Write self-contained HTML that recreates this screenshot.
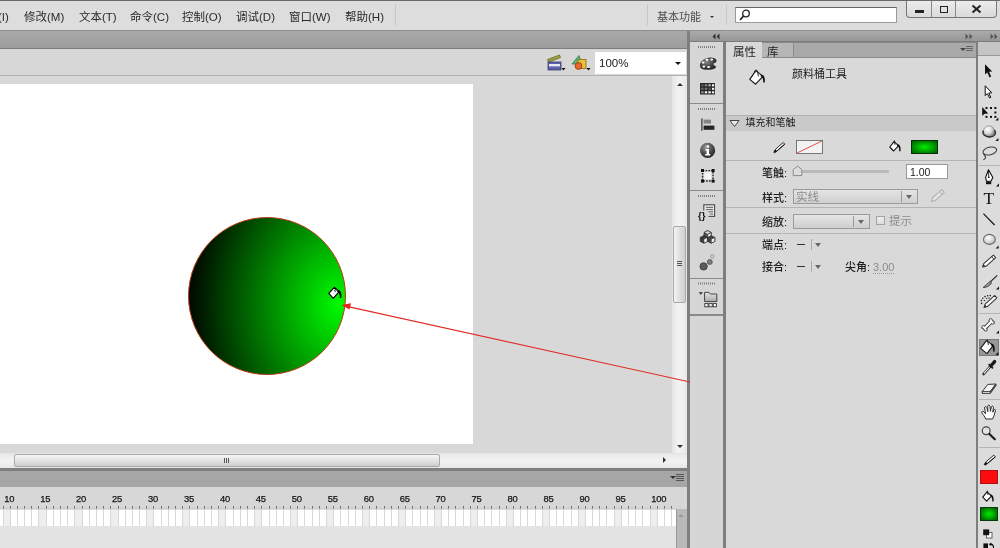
<!DOCTYPE html>
<html lang="zh-CN">
<head>
<meta charset="utf-8">
<title>Flash</title>
<style>
html,body{margin:0;padding:0;}
body{width:1000px;height:548px;overflow:hidden;position:relative;background:#d6d6d6;font-family:"Liberation Sans","Noto Sans CJK SC",sans-serif;font-size:12px;color:#222;}
.a{position:absolute;}
.t{position:absolute;white-space:nowrap;line-height:14px;}
#menubar{left:0;top:0;width:1000px;height:30px;background:#dddddd;border-top:1px solid #6a6a6a;box-sizing:border-box;}
.mi{top:9.5px;font-size:11.5px;color:#2a2a2a;}
.band{background:linear-gradient(#a9a9a9,#9d9d9d);}
.vsep{background:#7e7e7e;}
.hl{height:1px;background:#b4b4b4;}
.lab{font-size:11px;color:#1e1e1e;font-weight:500;}
</style>
</head>
<body>
<div id="wrap" style="position:absolute;left:0;top:0;width:1000px;height:548px;will-change:transform;">
<!-- ===== menu bar ===== -->
<div class="a" id="menubar"></div>
<div class="t mi" style="left:-25px;">插入(I)</div>
<div class="t mi" style="left:24px;">修改(M)</div>
<div class="t mi" style="left:79px;">文本(T)</div>
<div class="t mi" style="left:130px;">命令(C)</div>
<div class="t mi" style="left:182px;">控制(O)</div>
<div class="t mi" style="left:236px;">调试(D)</div>
<div class="t mi" style="left:289px;">窗口(W)</div>
<div class="t mi" style="left:345px;">帮助(H)</div>
<div class="a" style="left:395px;top:5px;width:1px;height:20px;background:#c6c6c6;"></div>
<div class="a" style="left:647px;top:5px;width:1px;height:20px;background:#c6c6c6;"></div>
<div class="t mi" style="left:657px;color:#4c4c4c;font-size:11px;">基本功能</div>
<div class="a" style="left:709.5px;top:15.5px;width:0;height:0;border-left:2.5px solid transparent;border-right:2.5px solid transparent;border-top:2.5px solid #333;"></div>
<div class="a" style="left:726px;top:5px;width:1px;height:20px;background:#c6c6c6;"></div>
<!-- search -->
<div class="a" style="left:735px;top:7px;width:162px;height:16px;background:#fff;border:1px solid #9a9a9a;border-top-color:#666;box-sizing:border-box;"></div>
<svg class="a" style="left:738px;top:8px;" width="14" height="14" viewBox="0 0 14 14"><circle cx="8" cy="5.5" r="3.3" fill="none" stroke="#222" stroke-width="1.3"/><path d="M5.6 8 L2 12" stroke="#222" stroke-width="1.8"/></svg>
<!-- window buttons -->
<div class="a" style="left:906px;top:1px;width:91px;height:16.5px;border:1px solid #777;border-top:none;border-radius:0 0 4px 4px;background:linear-gradient(#ececec,#dadada);box-sizing:border-box;"></div>
<div class="a" style="left:931px;top:1px;width:1px;height:16px;background:#888;"></div>
<div class="a" style="left:955px;top:1px;width:1px;height:16px;background:#888;"></div>
<div class="a" style="left:914.5px;top:10px;width:9.5px;height:2.5px;background:#222;"></div>
<div class="a" style="left:939.5px;top:5.5px;width:8.5px;height:7px;border:1.8px solid #222;box-sizing:border-box;"></div>
<svg class="a" style="left:971px;top:4px;" width="11" height="10" viewBox="0 0 11 10"><path d="M1.5 1.5 L9.5 8.5 M9.5 1.5 L1.5 8.5" stroke="#222" stroke-width="2"/></svg>

<!-- ===== dark band under menu ===== -->
<div class="a band" style="left:0;top:30px;width:1000px;height:19px;border-top:1px solid #8e8e8e;border-bottom:1px solid #7c7c7c;box-sizing:border-box;"></div>

<!-- ===== document toolbar / stage ===== -->
<div class="a" style="left:0;top:49px;width:687px;height:26px;background:#d7d7d7;"></div>
<div class="a" style="left:0;top:75px;width:687px;height:1px;background:#b2b2b2;"></div>
<div class="a" style="left:0;top:76px;width:672px;height:377px;background:#d8d8d8;"></div>
<div class="a" id="stage" style="left:0;top:84px;width:473px;height:360px;background:#fff;"></div>

<!-- vertical scrollbar of stage -->
<div class="a" style="left:672px;top:76px;width:15px;height:377px;background:linear-gradient(90deg,#e4e4e4,#f2f2f2 40%,#f0f0f0 70%,#e6e6e6);"></div>
<div class="a" style="left:677px;top:83px;width:0;height:0;border-left:3px solid transparent;border-right:3px solid transparent;border-bottom:3.5px solid #333;"></div>
<div class="a" style="left:677px;top:444.5px;width:0;height:0;border-left:3px solid transparent;border-right:3px solid transparent;border-top:3.5px solid #333;"></div>
<div class="a" style="left:673px;top:226px;width:13px;height:77px;box-sizing:border-box;border:1px solid #a9a9a9;border-radius:2px;background:linear-gradient(90deg,#f4f4f4,#dcdcdc 60%,#cfcfcf);"></div>
<div class="a" style="left:677px;top:261px;width:5px;height:1px;background:#555;box-shadow:0 2px 0 #555,0 4px 0 #555;"></div>
<!-- horizontal scrollbar -->
<div class="a" style="left:0;top:453px;width:687px;height:15px;background:linear-gradient(#e6e6e6,#f1f1f1 40%,#efefef 70%,#e6e6e6);"></div>
<div class="a" style="left:14px;top:454px;width:426px;height:13px;box-sizing:border-box;border:1px solid #a9a9a9;border-radius:2px;background:linear-gradient(#f6f6f6,#e2e2e2 55%,#cdcdcd);"></div>
<div class="a" style="left:224px;top:458px;width:1px;height:5px;background:#555;box-shadow:2px 0 0 #555,4px 0 0 #555;"></div>
<div class="a" style="left:663px;top:457px;width:0;height:0;border-top:3px solid transparent;border-bottom:3px solid transparent;border-left:3.5px solid #333;"></div>

<!-- circle + arrow -->
<svg class="a" style="left:0;top:76px;z-index:5;" width="700" height="376" viewBox="0 76 700 376">
<defs>
<radialGradient id="g1" gradientUnits="userSpaceOnUse" cx="339" cy="304" r="156" gradientTransform="translate(339 304) scale(1 1.25) translate(-339 -304)">
<stop offset="0" stop-color="#00fb00"/>
<stop offset="0.9" stop-color="#001600"/>
<stop offset="1" stop-color="#000000"/>
</radialGradient>
</defs>
<circle cx="267" cy="296" r="78.5" fill="url(#g1)" stroke="#b83a12" stroke-width="1"/>
<line x1="348" y1="306.6" x2="690" y2="382" stroke="#e02a22" stroke-width="1.1"/>
<polygon points="341.5,305 351,303.2 349.5,309.6" fill="#e8201c"/>
<!-- bucket cursor -->
<g>
<path d="M328.8 293.4 L334.4 287.4 L339.4 291.4 L333.2 298.4 Z" fill="#fff" stroke="#000" stroke-width="1.2" stroke-linejoin="round"/>
<path d="M338 289.8 C341 290.6 341.8 293.6 341.4 298 L339.8 298 C340 295 339.6 293.2 337 291.6 Z" fill="#000"/>
<circle cx="335.4" cy="290.6" r="0.9" fill="none" stroke="#000" stroke-width="0.7"/>
<path d="M335.2 287.6 L335.4 289.8" stroke="#000" stroke-width="0.8"/>
</g>
</svg>

<!-- zoom toolbar -->
<div class="a" style="left:595px;top:52px;width:91px;height:22px;background:#fff;"></div>
<div class="t" style="left:599px;top:55.5px;font-size:11.5px;color:#222;">100%</div>
<div class="a" style="left:675px;top:62px;width:0;height:0;border-left:3.5px solid transparent;border-right:3.5px solid transparent;border-top:3.5px solid #111;"></div>
<!-- edit scene icon -->
<svg class="a" style="left:545px;top:52px;" width="22" height="22" viewBox="0 0 22 22">
<path d="M2.5 7.5 L14.5 3 L15.5 5.6 L3.5 10.2 Z" fill="#9aa23a" stroke="#5a6020" stroke-width="0.7"/>
<rect x="3" y="10" width="13" height="8" fill="#5d62a8" stroke="#3a3d70" stroke-width="0.8"/>
<rect x="4" y="12" width="11" height="2.4" fill="#e8e8f4"/>
<path d="M16.5 16 l4 0 l-2 2.6 z" fill="#111"/>
</svg>
<!-- edit symbols icon -->
<svg class="a" style="left:569px;top:52px;" width="24" height="22" viewBox="0 0 24 22">
<path d="M3 12 L10 3.5 L13 12 Z" fill="#58b878" stroke="#2f7a4a" stroke-width="0.8"/>
<rect x="9" y="7.5" width="8" height="9" fill="#e8c040" stroke="#8a6a10" stroke-width="0.8"/>
<circle cx="9.5" cy="14" r="3.4" fill="#e86a28" stroke="#8a3a10" stroke-width="0.8"/>
<path d="M17.5 16 l4 0 l-2 2.6 z" fill="#111"/>
</svg>

<!-- ===== timeline ===== -->
<div class="a" style="left:0;top:468px;width:687px;height:3px;background:#7f7f7f;"></div>
<div class="a band" style="left:0;top:471px;width:687px;height:16px;background:#a6a6a6;"></div>
<div class="a" style="left:670px;top:476px;width:0;height:0;border-left:3px solid transparent;border-right:3px solid transparent;border-top:3px solid #333;"></div>
<div class="a" style="left:676px;top:474px;width:8px;height:1px;background:#555;box-shadow:0 2px 0 #555,0 4px 0 #555,0 6px 0 #555;"></div>
<div class="a" style="left:0;top:487px;width:687px;height:22px;background:#d7d7d7;"></div>
<div class="a" style="left:0;top:509px;width:676px;height:17px;background:#fff;" id="frames"></div>
<svg class="a" style="left:0;top:487px;" width="676" height="39" viewBox="0 0 676 39"><rect x="3.5" y="22" width="7.0" height="17" fill="#eeeeee"/><rect x="38.5" y="22" width="8.0" height="17" fill="#eeeeee"/><rect x="74.5" y="22" width="8.0" height="17" fill="#eeeeee"/><rect x="110.5" y="22" width="8.0" height="17" fill="#eeeeee"/><rect x="146.5" y="22" width="7.0" height="17" fill="#eeeeee"/><rect x="182.5" y="22" width="7.0" height="17" fill="#eeeeee"/><rect x="218.5" y="22" width="7.0" height="17" fill="#eeeeee"/><rect x="254.5" y="22" width="7.0" height="17" fill="#eeeeee"/><rect x="290.5" y="22" width="7.0" height="17" fill="#eeeeee"/><rect x="326.5" y="22" width="7.0" height="17" fill="#eeeeee"/><rect x="362.5" y="22" width="7.0" height="17" fill="#eeeeee"/><rect x="398.5" y="22" width="7.0" height="17" fill="#eeeeee"/><rect x="434.5" y="22" width="7.0" height="17" fill="#eeeeee"/><rect x="470.5" y="22" width="7.0" height="17" fill="#eeeeee"/><rect x="506.5" y="22" width="7.0" height="17" fill="#eeeeee"/><rect x="542.5" y="22" width="7.0" height="17" fill="#eeeeee"/><rect x="578.5" y="22" width="7.0" height="17" fill="#eeeeee"/><rect x="614.5" y="22" width="7.0" height="17" fill="#eeeeee"/><rect x="650.5" y="22" width="7.0" height="17" fill="#eeeeee"/><path d="M-4.5 22V39M3.5 22V39M10.5 22V39M17.5 22V39M24.5 22V39M31.5 22V39M38.5 22V39M46.5 22V39M53.5 22V39M60.5 22V39M67.5 22V39M74.5 22V39M82.5 22V39M89.5 22V39M96.5 22V39M103.5 22V39M110.5 22V39M118.5 22V39M125.5 22V39M132.5 22V39M139.5 22V39M146.5 22V39M153.5 22V39M161.5 22V39M168.5 22V39M175.5 22V39M182.5 22V39M189.5 22V39M197.5 22V39M204.5 22V39M211.5 22V39M218.5 22V39M225.5 22V39M233.5 22V39M240.5 22V39M247.5 22V39M254.5 22V39M261.5 22V39M269.5 22V39M276.5 22V39M283.5 22V39M290.5 22V39M297.5 22V39M304.5 22V39M312.5 22V39M319.5 22V39M326.5 22V39M333.5 22V39M340.5 22V39M348.5 22V39M355.5 22V39M362.5 22V39M369.5 22V39M376.5 22V39M384.5 22V39M391.5 22V39M398.5 22V39M405.5 22V39M412.5 22V39M420.5 22V39M427.5 22V39M434.5 22V39M441.5 22V39M448.5 22V39M455.5 22V39M463.5 22V39M470.5 22V39M477.5 22V39M484.5 22V39M491.5 22V39M499.5 22V39M506.5 22V39M513.5 22V39M520.5 22V39M527.5 22V39M535.5 22V39M542.5 22V39M549.5 22V39M556.5 22V39M563.5 22V39M571.5 22V39M578.5 22V39M585.5 22V39M592.5 22V39M599.5 22V39M606.5 22V39M614.5 22V39M621.5 22V39M628.5 22V39M635.5 22V39M642.5 22V39M650.5 22V39M657.5 22V39M664.5 22V39M671.5 22V39" stroke="#d8d8d8" stroke-width="1" fill="none"/><path d="M-4.5 19V22M3.5 19V22M10.5 19V22M17.5 19V22M24.5 19V22M31.5 19V22M38.5 19V22M46.5 19V22M53.5 19V22M60.5 19V22M67.5 19V22M74.5 19V22M82.5 19V22M89.5 19V22M96.5 19V22M103.5 19V22M110.5 19V22M118.5 19V22M125.5 19V22M132.5 19V22M139.5 19V22M146.5 19V22M153.5 19V22M161.5 19V22M168.5 19V22M175.5 19V22M182.5 19V22M189.5 19V22M197.5 19V22M204.5 19V22M211.5 19V22M218.5 19V22M225.5 19V22M233.5 19V22M240.5 19V22M247.5 19V22M254.5 19V22M261.5 19V22M269.5 19V22M276.5 19V22M283.5 19V22M290.5 19V22M297.5 19V22M304.5 19V22M312.5 19V22M319.5 19V22M326.5 19V22M333.5 19V22M340.5 19V22M348.5 19V22M355.5 19V22M362.5 19V22M369.5 19V22M376.5 19V22M384.5 19V22M391.5 19V22M398.5 19V22M405.5 19V22M412.5 19V22M420.5 19V22M427.5 19V22M434.5 19V22M441.5 19V22M448.5 19V22M455.5 19V22M463.5 19V22M470.5 19V22M477.5 19V22M484.5 19V22M491.5 19V22M499.5 19V22M506.5 19V22M513.5 19V22M520.5 19V22M527.5 19V22M535.5 19V22M542.5 19V22M549.5 19V22M556.5 19V22M563.5 19V22M571.5 19V22M578.5 19V22M585.5 19V22M592.5 19V22M599.5 19V22M606.5 19V22M614.5 19V22M621.5 19V22M628.5 19V22M635.5 19V22M642.5 19V22M650.5 19V22M657.5 19V22M664.5 19V22M671.5 19V22" stroke="#707070" stroke-width="1" fill="none"/><g font-family="Liberation Sans, sans-serif" font-size="9.4" letter-spacing="-0.2" fill="#151515" stroke="#151515" stroke-width="0.25"><text y="14.8" x="4.2">10</text><text y="14.8" x="40.2">15</text><text y="14.8" x="76.1">20</text><text y="14.8" x="112.1">25</text><text y="14.8" x="148.0">30</text><text y="14.8" x="183.9">35</text><text y="14.8" x="219.9">40</text><text y="14.8" x="255.8">45</text><text y="14.8" x="291.8">50</text><text y="14.8" x="327.8">55</text><text y="14.8" x="363.7">60</text><text y="14.8" x="399.7">65</text><text y="14.8" x="435.6">70</text><text y="14.8" x="471.6">75</text><text y="14.8" x="507.5">80</text><text y="14.8" x="543.5">85</text><text y="14.8" x="579.4">90</text><text y="14.8" x="615.4">95</text><text y="14.8" x="651.3">100</text></g><rect x="0" y="21.5" width="676" height="1" fill="#c4c4c4"/></svg>
<div class="a" style="left:0;top:526px;width:676px;height:22px;background:#e3e3e3;"></div>
<div class="a" style="left:676px;top:509px;width:11px;height:39px;background:#b9b9b9;border-left:1px solid #999;box-sizing:border-box;"></div>
<div class="a" style="left:678px;top:514px;width:0;height:0;border-left:3px solid transparent;border-right:3px solid transparent;border-bottom:3px solid #999;"></div>

<!-- ===== right side ===== -->
<div class="a vsep" style="left:687px;top:31px;width:3px;height:517px;"></div>
<!-- dock column -->
<div class="a" style="left:690px;top:31px;width:310px;height:11px;background:linear-gradient(#ababab,#979797);border-bottom:1px solid #7c7c7c;box-sizing:border-box;"></div>
<div class="a" style="left:690px;top:42px;width:33px;height:506px;background:#d6d6d6;"></div>
<svg class="a" style="left:712px;top:33px;" width="8" height="7" viewBox="0 0 8 7"><path d="M3.5 0.5 L0.5 3.5 L3.5 6.5 Z M7.5 0.5 L4.5 3.5 L7.5 6.5 Z" fill="#333"/></svg>
<div class="a vsep" style="left:723px;top:42px;width:3px;height:506px;"></div>
<div class="a" style="left:690px;top:103px;width:33px;height:1px;background:#8a8a8a;"></div>
<div class="a" style="left:690px;top:190px;width:33px;height:1px;background:#8a8a8a;"></div>
<div class="a" style="left:690px;top:278px;width:33px;height:1px;background:#8a8a8a;"></div>
<div class="a" style="left:690px;top:314px;width:33px;height:1.5px;background:#8a8a8a;"></div>

<!-- panel header -->

<svg class="a" style="left:965px;top:33px;" width="8" height="7" viewBox="0 0 8 7"><path d="M0.5 0.5 L3.5 3.5 L0.5 6.5 Z M4.5 0.5 L7.5 3.5 L4.5 6.5 Z" fill="#555"/></svg>
<svg class="a" style="left:990px;top:33px;" width="8" height="7" viewBox="0 0 8 7"><path d="M0.5 0.5 L3.5 3.5 L0.5 6.5 Z M4.5 0.5 L7.5 3.5 L4.5 6.5 Z" fill="#555"/></svg>
<!-- tab bar -->
<div class="a" style="left:726px;top:42px;width:250px;height:16px;background:#a9a9a9;border-top:1px solid #888;border-bottom:1px solid #8a8a8a;box-sizing:border-box;"></div>
<div class="a" style="left:726px;top:42px;width:36px;height:16px;background:#d9d9d9;"></div>
<div class="a" style="left:762px;top:43px;width:31px;height:14px;background:#b6b6b6;border-right:1px solid #8a8a8a;"></div>
<div class="t" style="left:733px;top:44.5px;font-size:11.5px;color:#222;">属性</div>
<div class="t" style="left:767px;top:44.5px;font-size:11.5px;color:#222;">库</div>
<div class="a" style="left:960px;top:48px;width:0;height:0;border-left:3px solid transparent;border-right:3px solid transparent;border-top:3px solid #444;"></div>
<div class="a" style="left:966px;top:46px;width:7px;height:1px;background:#666;box-shadow:0 2px 0 #666,0 4px 0 #666;"></div>
<!-- panel body -->
<div class="a" style="left:726px;top:58px;width:250px;height:490px;background:#d9d9d9;"></div>
<div class="t" style="left:792px;top:67px;font-size:11px;color:#1a1a1a;">颜料桶工具</div>
<!-- section header -->
<div class="a" style="left:726px;top:115px;width:250px;height:16px;background:#c9c9c9;border-top:1px solid #b0b0b0;box-sizing:border-box;"></div>
<svg class="a" style="left:729px;top:119px;" width="12" height="10" viewBox="0 0 12 10"><path d="M1 1.5 L10 1.5 L5.5 7.5 Z" fill="#e8e8e8" stroke="#444" stroke-width="1"/></svg>
<div class="t" style="left:745.5px;top:116px;font-size:10px;color:#222;">填充和笔触</div>
<!-- separators -->
<div class="a hl" style="left:726px;top:160px;width:250px;"></div>
<div class="a hl" style="left:726px;top:207px;width:250px;"></div>
<div class="a hl" style="left:726px;top:233px;width:250px;"></div>
<!-- stroke swatch -->
<div class="a" style="left:796px;top:140px;width:27px;height:14px;background:#f2f2f2;border:1px solid #777;box-sizing:border-box;"></div>
<svg class="a" style="left:797px;top:141px;" width="25" height="12" viewBox="0 0 25 12"><line x1="0" y1="12" x2="25" y2="0" stroke="#e05050" stroke-width="1"/></svg>
<!-- fill swatch -->
<div class="a" style="left:911px;top:140px;width:27px;height:14px;border:1px solid #083008;box-sizing:border-box;background:radial-gradient(ellipse at center,#00f000 0%,#00b000 40%,#005800 100%);"></div>
<!-- rows -->
<div class="t lab" style="left:762px;top:166px;">笔触:</div>
<div class="a" style="left:797px;top:170px;width:92px;height:3px;background:#b9b9b9;border-radius:1px;"></div>
<svg class="a" style="left:792px;top:165px;" width="11" height="12" viewBox="0 0 11 12"><path d="M5.5 1 L9.8 4.6 L9.8 10.6 L1.2 10.6 L1.2 4.6 Z" fill="#dcdcdc" stroke="#8a8a8a" stroke-width="1"/></svg>
<div class="a" style="left:906px;top:164px;width:42px;height:15px;background:#fff;border:1px solid #999;box-sizing:border-box;"></div>
<div class="t" style="left:910px;top:165px;font-size:10.5px;color:#222;">1.00</div>
<div class="t lab" style="left:762px;top:191px;">样式:</div>
<div class="a" style="left:793px;top:189px;width:125px;height:15px;background:linear-gradient(#e4e4e4,#cfcfcf);border:1px solid #9a9a9a;box-sizing:border-box;"></div>
<div class="a" style="left:901px;top:191px;width:1px;height:11px;background:#9a9a9a;"></div>
<div class="a" style="left:906px;top:195px;width:0;height:0;border-left:3.5px solid transparent;border-right:3.5px solid transparent;border-top:4px solid #666;"></div>
<div class="t" style="left:796px;top:190px;font-size:11.5px;color:#8c8c8c;">实线</div>
<div class="t lab" style="left:762px;top:215px;">缩放:</div>
<div class="a" style="left:793px;top:214px;width:77px;height:15px;background:linear-gradient(#e4e4e4,#cfcfcf);border:1px solid #9a9a9a;box-sizing:border-box;"></div>
<div class="a" style="left:853px;top:216px;width:1px;height:11px;background:#9a9a9a;"></div>
<div class="a" style="left:858px;top:220px;width:0;height:0;border-left:3.5px solid transparent;border-right:3.5px solid transparent;border-top:4px solid #666;"></div>
<div class="a" style="left:875.5px;top:216px;width:9px;height:9px;background:linear-gradient(#f0f0f0,#dcdcdc);border:1px solid #a2a2a2;box-sizing:border-box;"></div>
<div class="t" style="left:889px;top:214px;font-size:11.5px;color:#8c8c8c;">提示</div>
<div class="t lab" style="left:762px;top:238px;">端点:</div>
<div class="a" style="left:797px;top:244px;width:8px;height:1px;background:#333;"></div>
<div class="a" style="left:811px;top:239px;width:1px;height:11px;background:#aaa;"></div>
<div class="a" style="left:815px;top:243px;width:0;height:0;border-left:3.5px solid transparent;border-right:3.5px solid transparent;border-top:4px solid #666;"></div>
<div class="t lab" style="left:762px;top:260px;">接合:</div>
<div class="a" style="left:797px;top:266px;width:8px;height:1px;background:#333;"></div>
<div class="a" style="left:811px;top:261px;width:1px;height:11px;background:#aaa;"></div>
<div class="a" style="left:815px;top:265px;width:0;height:0;border-left:3.5px solid transparent;border-right:3.5px solid transparent;border-top:4px solid #666;"></div>
<div class="t lab" style="left:845px;top:260px;">尖角:</div>
<div class="t" style="left:873px;top:261px;font-size:11px;color:#8a8a8a;border-bottom:1px dotted #999;line-height:12px;">3.00</div>

<!-- panel right border + tools column -->
<div class="a vsep" style="left:976px;top:42px;width:2px;height:506px;"></div>
<div class="a" style="left:978px;top:42px;width:22px;height:14px;background:#c5c5c5;border-bottom:1px solid #999;box-sizing:border-box;"></div>
<div class="a" style="left:978px;top:56px;width:22px;height:492px;background:#dcdcdc;"></div>
<div class="a" style="left:979px;top:165px;width:21px;height:1px;background:#b5b5b5;"></div>
<div class="a" style="left:979px;top:313px;width:21px;height:1px;background:#b5b5b5;"></div>
<div class="a" style="left:979px;top:399px;width:21px;height:1px;background:#b5b5b5;"></div>
<div class="a" style="left:979px;top:447px;width:21px;height:1px;background:#b5b5b5;"></div>
<div class="a" style="left:979px;top:339px;width:20px;height:17px;background:#979797;border:1px solid #7a7a7a;box-sizing:border-box;"></div>
<div class="a" style="left:980px;top:470px;width:18px;height:14px;background:#fb0d0d;border:1px solid #b01010;box-sizing:border-box;"></div>
<div class="a" style="left:980px;top:507px;width:18px;height:14px;border:1px solid #0a3a0a;box-sizing:border-box;background:radial-gradient(ellipse at center,#00ee00 0%,#00a800 45%,#005000 100%);"></div>

<!-- dock icons -->
<svg class="a" style="left:690px;top:42px;" width="33" height="280" viewBox="690 42 33 280">
<defs>
<radialGradient id="pal" cx="0.4" cy="0.35" r="0.75"><stop offset="0" stop-color="#8a8a8a"/><stop offset="0.6" stop-color="#3c3c3c"/><stop offset="1" stop-color="#1c1c1c"/></radialGradient>
<radialGradient id="inf" cx="0.4" cy="0.3" r="0.8"><stop offset="0" stop-color="#9a9a9a"/><stop offset="0.55" stop-color="#474747"/><stop offset="1" stop-color="#1e1e1e"/></radialGradient>
<linearGradient id="fold" x1="0" y1="0" x2="0" y2="1"><stop offset="0" stop-color="#e8e8e8"/><stop offset="1" stop-color="#a8a8a8"/></linearGradient>
</defs>
<path d="M698.5 46v2M700.5 46v2M702.5 46v2M704.5 46v2M706.5 46v2M708.5 46v2M710.5 46v2M712.5 46v2M714.5 46v2" stroke="#808080" stroke-width="1" fill="none"/><path d="M698.5 108v2M700.5 108v2M702.5 108v2M704.5 108v2M706.5 108v2M708.5 108v2M710.5 108v2M712.5 108v2M714.5 108v2" stroke="#808080" stroke-width="1" fill="none"/><path d="M698.5 195v2M700.5 195v2M702.5 195v2M704.5 195v2M706.5 195v2M708.5 195v2M710.5 195v2M712.5 195v2M714.5 195v2" stroke="#808080" stroke-width="1" fill="none"/><path d="M698.5 282.5v2M700.5 282.5v2M702.5 282.5v2M704.5 282.5v2M706.5 282.5v2M708.5 282.5v2M710.5 282.5v2M712.5 282.5v2M714.5 282.5v2" stroke="#808080" stroke-width="1" fill="none"/>
<!-- palette -->
<path d="M700 66 C699.5 61 705 57.2 711 57.4 C715.5 57.6 717.2 59.6 716.4 61.6 C715.8 63.2 713.4 63 713.6 64.6 C713.8 66 716.2 65.6 716 67 C715.6 69.2 710 70 706 69.8 C702.5 69.6 700.2 68.6 700 66 Z" fill="url(#pal)"/>
<ellipse cx="703.2" cy="62.6" rx="1.3" ry="1.1" fill="#fff"/>
<ellipse cx="707" cy="59.8" rx="1.4" ry="1.1" fill="#fff"/>
<ellipse cx="711.8" cy="59.6" rx="1.4" ry="1.1" fill="#fff"/>
<ellipse cx="703.8" cy="66.6" rx="1.4" ry="1.1" fill="#fff"/>
<ellipse cx="708.6" cy="67" rx="1.5" ry="1.1" fill="#fff"/>
<!-- swatches -->
<rect x="700" y="83" width="15" height="11.5" fill="#2a2a2a"/>
<rect x="701.2" y="84.3" width="2.4" height="2" fill="#5a5a5a"/><rect x="704.8" y="84.3" width="2.4" height="2" fill="#8a8a8a"/><rect x="708.4" y="84.3" width="2.4" height="2" fill="#bcbcbc"/><rect x="712" y="84.3" width="2.2" height="2" fill="#fff"/>
<rect x="701.2" y="87.8" width="2.4" height="2" fill="#666"/><rect x="704.8" y="87.8" width="2.4" height="2" fill="#777"/><rect x="708.4" y="87.8" width="2.4" height="2" fill="#555"/><rect x="712" y="87.8" width="2.2" height="2" fill="#fff"/>
<rect x="701.2" y="91.3" width="2.4" height="2" fill="#999"/><rect x="704.8" y="91.3" width="2.4" height="2" fill="#fff"/><rect x="708.4" y="91.3" width="2.4" height="2" fill="#fff"/><rect x="712" y="91.3" width="2.2" height="2" fill="#f4f4f4"/>
<!-- align -->
<rect x="701.3" y="118.4" width="1.2" height="12.4" fill="#333"/>
<rect x="703.6" y="119.6" width="7.4" height="4" fill="#858585"/>
<rect x="703.6" y="125.6" width="10.8" height="4.2" fill="#242424"/>
<!-- info -->
<circle cx="707.6" cy="150.4" r="7.6" fill="url(#inf)"/>
<rect x="706.6" y="145.4" width="2.4" height="2.2" fill="#fff"/>
<path d="M705.4 149 H709 V154 H710.2 V155.4 H705.2 V154 H706.6 V150.4 H705.4 Z" fill="#fff"/>
<!-- transform -->
<rect x="702.6" y="170.6" width="10.4" height="10.4" fill="none" stroke="#222" stroke-width="1.4" stroke-dasharray="1.6 1.3"/>
<rect x="704.4" y="172.4" width="6.8" height="6.8" fill="#f8f8f8"/>
<g fill="#111"><rect x="701" y="169" width="3" height="3"/><rect x="711.6" y="169" width="3" height="3"/><rect x="701" y="179.6" width="3" height="3"/><rect x="711.6" y="179.6" width="3" height="3"/></g>
<!-- code snippets -->
<rect x="703.8" y="204.8" width="10.8" height="11.6" fill="#e6e6e6" stroke="#4a4a4a" stroke-width="1.1"/>
<path d="M706 207.4 H713 M706 209.6 H713 M706 211.8 H713 M709.6 214 H713" stroke="#555" stroke-width="0.9"/>
<rect x="698" y="210.6" width="10.4" height="9.4" fill="#d6d6d6"/>
<text x="698" y="218.6" font-family="Liberation Sans, sans-serif" font-weight="bold" font-size="9.5" fill="#111">{}</text>
<!-- components -->
<g stroke="#2a2a2a" stroke-width="0.7" stroke-linejoin="round">
<path d="M704 232.6 L707.6 230.6 L711.2 232.6 L711.2 237 L707.6 239 L704 237 Z" fill="#555"/>
<path d="M704 232.6 L707.6 230.6 L711.2 232.6 L707.6 234.4 Z" fill="#d8d8d8"/>
<path d="M707.6 234.4 L711.2 232.6 L711.2 237 L707.6 239 Z" fill="#f2f2f2"/>
<path d="M700.2 237.4 L703.8 235.6 L707.4 237.4 L707.4 241.4 L703.8 243.2 L700.2 241.4 Z" fill="#3a3a3a"/>
<path d="M703.8 239 L707.4 237.4 L707.4 241.4 L703.8 243.2 Z" fill="#f0f0f0"/>
<path d="M707.6 237.4 L711.2 235.6 L714.8 237.4 L714.8 241.4 L711.2 243.2 L707.6 241.4 Z" fill="#444"/>
<path d="M711.2 239 L714.8 237.4 L714.8 241.4 L711.2 243.2 Z" fill="#f0f0f0"/>
</g>
<!-- motion presets -->
<circle cx="703.6" cy="266.4" r="3.7" fill="#5a5a5a" stroke="#3e3e3e" stroke-width="0.8"/>
<circle cx="709.8" cy="262" r="2.5" fill="#7a7a7a" stroke="#555" stroke-width="0.8"/>
<circle cx="712.3" cy="256.4" r="1.7" fill="#d0d0d0" stroke="#8a8a8a" stroke-width="0.8"/>
<!-- project -->
<path d="M698.6 292.2 h4.4 l-2.2 2.6 z" fill="#333"/>
<path d="M704.6 301.6 V292.4 H709 L710.4 294 H716.8 V301.6 Z" fill="url(#fold)" stroke="#444" stroke-width="1"/>
<g fill="#fff" stroke="#333" stroke-width="0.9"><rect x="704.8" y="303.6" width="3.2" height="3.2"/><rect x="709" y="303.6" width="3.2" height="3.2"/><rect x="713.2" y="303.6" width="3.2" height="3.2"/></g>
</svg>

<!-- tool icons -->
<svg class="a" style="left:978px;top:56px;" width="22" height="492" viewBox="978 56 22 492">
<defs>
<radialGradient id="sph" cx="0.38" cy="0.32" r="0.75"><stop offset="0" stop-color="#ffffff"/><stop offset="0.5" stop-color="#d8d8d8"/><stop offset="1" stop-color="#6e6e6e"/></radialGradient>
<radialGradient id="ovl" cx="0.4" cy="0.35" r="0.7"><stop offset="0" stop-color="#ffffff"/><stop offset="0.7" stop-color="#d0d0d0"/><stop offset="1" stop-color="#a0a0a0"/></radialGradient>
</defs>
<!-- selection arrow -->
<path d="M985 64.2 L985 74.4 L987.3 72.4 L989.6 77.4 L991.2 76.6 L989 71.8 L992.2 71.6 Z" fill="#111"/>
<!-- subselection arrow -->
<path d="M985.2 85.8 L985.2 95.6 L987.4 93.6 L989.6 98 L990.8 97.4 L988.8 93 L991.8 92.8 Z" fill="#fff" stroke="#111" stroke-width="1" stroke-linejoin="round"/>
<!-- free transform -->
<g fill="#111">
<rect x="985.5" y="107.0" width="2" height="2"/><rect x="990.0" y="107.0" width="2" height="2"/><rect x="994.4" y="107.0" width="2" height="2"/><rect x="994.4" y="111.5" width="2" height="2"/><rect x="994.4" y="115.9" width="2" height="2"/><rect x="990.0" y="115.9" width="2" height="2"/><rect x="985.5" y="115.9" width="2" height="2"/>
<path d="M982.2 107 L982.2 115.8 L984.6 113.8 L988.2 113.6 Z"/>
<path d="M998.4 117.6 v3 h-3 z"/>
</g>
<!-- 3D rotation -->
<circle cx="989" cy="131.4" r="5.6" fill="url(#sph)" stroke="#777" stroke-width="0.6"/>
<path d="M983.4 130.6 C981.8 134 985 137 989.6 137 C994.4 137 996.8 133.6 994.6 130" fill="none" stroke="#2c2c2c" stroke-width="1.3"/>
<path d="M998.4 138 v3 h-3 z" fill="#111"/>
<!-- lasso -->
<g fill="none" stroke="#3c3c3c" stroke-width="1.1">
<ellipse cx="989.8" cy="151" rx="7" ry="3.8" transform="rotate(-14 989.8 151)"/>
<path d="M984 153.6 C983.2 155.6 986.2 156 985.6 157.6 C985.2 158.8 984.2 159.2 983.4 159.8"/>
</g>
<!-- pen -->
<path d="M988.5 169.8 L992.8 177.4 L991 181.2 L986.4 181.2 L985.6 177.4 Z" fill="#fff" stroke="#111" stroke-width="1.1" stroke-linejoin="round"/>
<path d="M988.5 170.4 L988.7 176.4" stroke="#111" stroke-width="0.9"/>
<circle cx="988.7" cy="177.2" r="0.9" fill="#111"/>
<rect x="986" y="181.6" width="5.2" height="2.6" fill="#111"/>
<path d="M999 183.4 v3 h-3 z" fill="#111"/>
<!-- text -->
<text x="983.6" y="203.8" font-family="Liberation Serif, serif" font-size="17.5" fill="#111">T</text>
<!-- line -->
<path d="M983.4 213.6 L994.6 225" stroke="#1c1c1c" stroke-width="1.3"/>
<!-- oval -->
<ellipse cx="989.4" cy="239.4" rx="5.9" ry="5" fill="url(#ovl)" stroke="#6a6a6a" stroke-width="1.1"/>
<path d="M998.6 245.4 v3 h-3 z" fill="#111"/>
<!-- pencil -->
<g transform="translate(982.6 267) rotate(-41.6)">
<path d="M0 0 L3 -1.7 L16 -1.7 L16 1.7 L3 1.7 Z" fill="#fff" stroke="#333" stroke-width="1" stroke-linejoin="round"/>
<path d="M0 0 L2.6 -1.4 L2.6 1.4 Z" fill="#333"/>
<path d="M13.6 -1.7 V1.7" stroke="#333" stroke-width="0.9"/>
</g>
<!-- brush -->
<path d="M997.2 275.4 L989.8 282.4" stroke="#222" stroke-width="1.2"/>
<path d="M990.6 281.2 L991.4 283.2 C989.4 286.4 986 287.6 983.2 287.4 C985.6 285.8 987.2 283.2 990.6 281.2 Z" fill="#9a9a9a" stroke="#333" stroke-width="0.9" stroke-linejoin="round"/>
<path d="M999 286.4 v3 h-3 z" fill="#111"/>
<!-- deco -->
<g transform="translate(984 307.4) rotate(-42.2)">
<path d="M0 0 L3 -1.6 L16 -1.6 L16 1.6 L3 1.6 Z" fill="#fff" stroke="#333" stroke-width="1" stroke-linejoin="round"/>
<path d="M0 0 L2.6 -1.4 L2.6 1.4 Z" fill="#333"/>
</g>
<g fill="#222">
<circle cx="981.6" cy="303.4" r="0.8"/><circle cx="981.4" cy="300.6" r="0.8"/><circle cx="982.8" cy="298.2" r="0.8"/><circle cx="985" cy="296.6" r="0.8"/><circle cx="987.6" cy="295.8" r="0.8"/><circle cx="990.2" cy="295.6" r="0.8"/>
<circle cx="984.4" cy="300.6" r="0.7"/><circle cx="986.6" cy="298.6" r="0.7"/><circle cx="989" cy="298" r="0.7"/>
</g>
<!-- bone -->
<path d="M984.6 328.2 L991.6 321.4" stroke="#3a3a3a" stroke-width="4" stroke-linecap="round"/>
<circle cx="983.4" cy="327.2" r="2" fill="#3a3a3a"/><circle cx="985.6" cy="329.6" r="2" fill="#3a3a3a"/><circle cx="990.6" cy="320.2" r="2" fill="#3a3a3a"/><circle cx="992.8" cy="322.6" r="2" fill="#3a3a3a"/>
<path d="M984.6 328.2 L991.6 321.4" stroke="#fff" stroke-width="2.2" stroke-linecap="round"/>
<circle cx="983.4" cy="327.2" r="1.1" fill="#fff"/><circle cx="985.6" cy="329.6" r="1.1" fill="#fff"/><circle cx="990.6" cy="320.2" r="1.1" fill="#fff"/><circle cx="992.8" cy="322.6" r="1.1" fill="#fff"/>
<path d="M999 330.4 v3 h-3 z" fill="#111"/>
<!-- paint bucket (selected) -->
<path d="M980.6 348.4 L986.4 340.6 L993.2 345.4 L987 353.6 Z" fill="#fff" stroke="#1a1a1a" stroke-width="1.1" stroke-linejoin="round"/>
<path d="M987.4 339.4 L988.4 345" stroke="#1a1a1a" stroke-width="0.9"/>
<path d="M991.6 343.6 C994.6 344.4 995 347.6 994.6 351.6 L993 351.6 C993.2 348.4 993 346.6 990.6 345 Z" fill="#111"/>
<path d="M998.4 352 v3 h-3 z" fill="#111"/>
<!-- eyedropper -->
<path d="M983.6 374 L991 365.6" stroke="#222" stroke-width="2.6" stroke-linecap="round"/>
<path d="M984.2 373.2 L990.6 366" stroke="#fff" stroke-width="1.1" stroke-linecap="round"/>
<path d="M988.6 364.2 L993 368.4" stroke="#1a1a1a" stroke-width="1.6"/>
<path d="M990.8 366 L994.6 361.6" stroke="#1a1a1a" stroke-width="3.4" stroke-linecap="round"/>
<!-- eraser -->
<path d="M982.2 391.6 L987.8 384.4 L996 384 L990.2 391.6 Z" fill="#f4f4f4" stroke="#333" stroke-width="1" stroke-linejoin="round"/>
<path d="M982.2 391.6 L990.2 391.6 L996 384 L996 385.6 L990.4 393.4 L982.2 393.4 Z" fill="#555" stroke="#333" stroke-width="0.8" stroke-linejoin="round"/>
<path d="M983 392.4 L989.8 392.4" stroke="#eee" stroke-width="0.9"/>
<!-- hand -->
<path d="M985.8 419 C984.6 416.4 983 414.6 981.8 412.8 C981.2 411.4 982.8 410.6 983.8 411.8 L985.6 413.8 L984.6 408 C984.4 406.4 986.2 406 986.8 407.6 L987.8 411.6 L987.8 406.2 C987.8 404.8 989.8 404.8 990 406.2 L990.4 411.4 L991.4 407 C991.8 405.6 993.6 406 993.4 407.4 L992.8 412.2 L993.8 410 C994.4 408.8 995.8 409.4 995.4 410.8 C994.6 413.6 994 416.6 992.6 419 Z" fill="#fff" stroke="#2a2a2a" stroke-width="1" stroke-linejoin="round"/>
<!-- zoom -->
<circle cx="986.2" cy="430.8" r="3.9" fill="#e4e4e4" stroke="#444" stroke-width="1.2"/>
<path d="M989.4 434 L994.8 439.2" stroke="#1a1a1a" stroke-width="2.2" stroke-linecap="round"/>
<!-- stroke color pencil -->
<g transform="translate(984.2 464.8) rotate(-40.5)">
<path d="M0 0 L3 -1.1 L13.6 -1.1 L13.6 1.1 L3 1.1 Z" fill="#fff" stroke="#222" stroke-width="0.9" stroke-linejoin="round"/>
<path d="M0 0 L3.2 -1.2 L3.2 1.2 Z" fill="#111"/>
<path d="M0.4 0.9 L13.6 1.3" stroke="#111" stroke-width="0.9"/>
</g>
<!-- fill bucket small -->
<path d="M982.8 497.2 L987 491.8 L991.6 495.8 L986.6 501.2 Z" fill="#fff" stroke="#111" stroke-width="1.1" stroke-linejoin="round"/>
<path d="M987.4 490.6 L988 495" stroke="#111" stroke-width="0.9"/>
<path d="M990.6 494.2 C993.4 495 993.8 497.6 993.6 501.4 L992.2 501.4 C992.4 498.6 992 497 989.8 495.6 Z" fill="#111"/>
<!-- black/white -->
<rect x="986.6" y="532.6" width="5.4" height="5.4" fill="#fff" stroke="#444" stroke-width="0.8"/>
<rect x="983.2" y="529.4" width="6" height="5.8" fill="#111"/>
<!-- swap -->
<rect x="983.4" y="543.4" width="4.6" height="4.6" fill="#111"/>
<path d="M989.6 544.2 C992 543.6 993.6 545 993.6 548" fill="none" stroke="#111" stroke-width="1.2"/>
<path d="M988.8 544.4 l2.6 -1.8 l0 3.4 z" fill="#111"/>
</svg>

<!-- property panel icons -->
<svg class="a" style="left:726px;top:58px;" width="250" height="160" viewBox="726 58 250 160">
<!-- big bucket -->
<path d="M749.8 79.4 L755.8 70.6 L763 76.4 L755.6 84.2 Z" fill="#fff" stroke="#1a1a1a" stroke-width="1.2" stroke-linejoin="round"/>
<path d="M755 72.6 C754 70.4 756.4 69 757.4 71 L758.4 76.4" fill="none" stroke="#1a1a1a" stroke-width="0.9"/>
<path d="M761.4 74.6 C764.6 75.4 765.2 78.4 764.8 82.6 L763.2 82.6 C763.4 79.6 763 77.6 760.4 76 Z" fill="#111"/>
<!-- stroke pencil -->
<g transform="translate(773.8 152.4) rotate(-42)">
<path d="M0 0 L3 -1.1 L13.6 -1.1 L13.6 1.1 L3 1.1 Z" fill="#fff" stroke="#222" stroke-width="0.9" stroke-linejoin="round"/>
<path d="M0 0 L3.2 -1.2 L3.2 1.2 Z" fill="#111"/>
<path d="M0.4 0.9 L13.6 1.3" stroke="#111" stroke-width="0.9"/>
</g>
<!-- fill bucket -->
<path d="M889.8 147 L894 141.6 L898.6 145.6 L893.6 151 Z" fill="#fff" stroke="#111" stroke-width="1.1" stroke-linejoin="round"/>
<path d="M894.4 140.4 L895 144.8" stroke="#111" stroke-width="0.9"/>
<path d="M897.6 144 C900.4 144.8 900.8 147.4 900.6 151.2 L899.2 151.2 C899.4 148.4 899 146.8 896.8 145.4 Z" fill="#111"/>
<!-- faded pencil -->
<g transform="translate(931.4 201.4) rotate(-42)" opacity="0.55">
<path d="M0 0 L3.4 -1.9 L15.6 -1.9 L15.6 1.9 L3.4 1.9 Z" fill="#eee" stroke="#8a8a8a" stroke-width="1" stroke-linejoin="round"/>
<path d="M12.8 -1.9 V1.9" stroke="#8a8a8a" stroke-width="0.9"/>
</g>
</svg>

</div>
</body>
</html>
